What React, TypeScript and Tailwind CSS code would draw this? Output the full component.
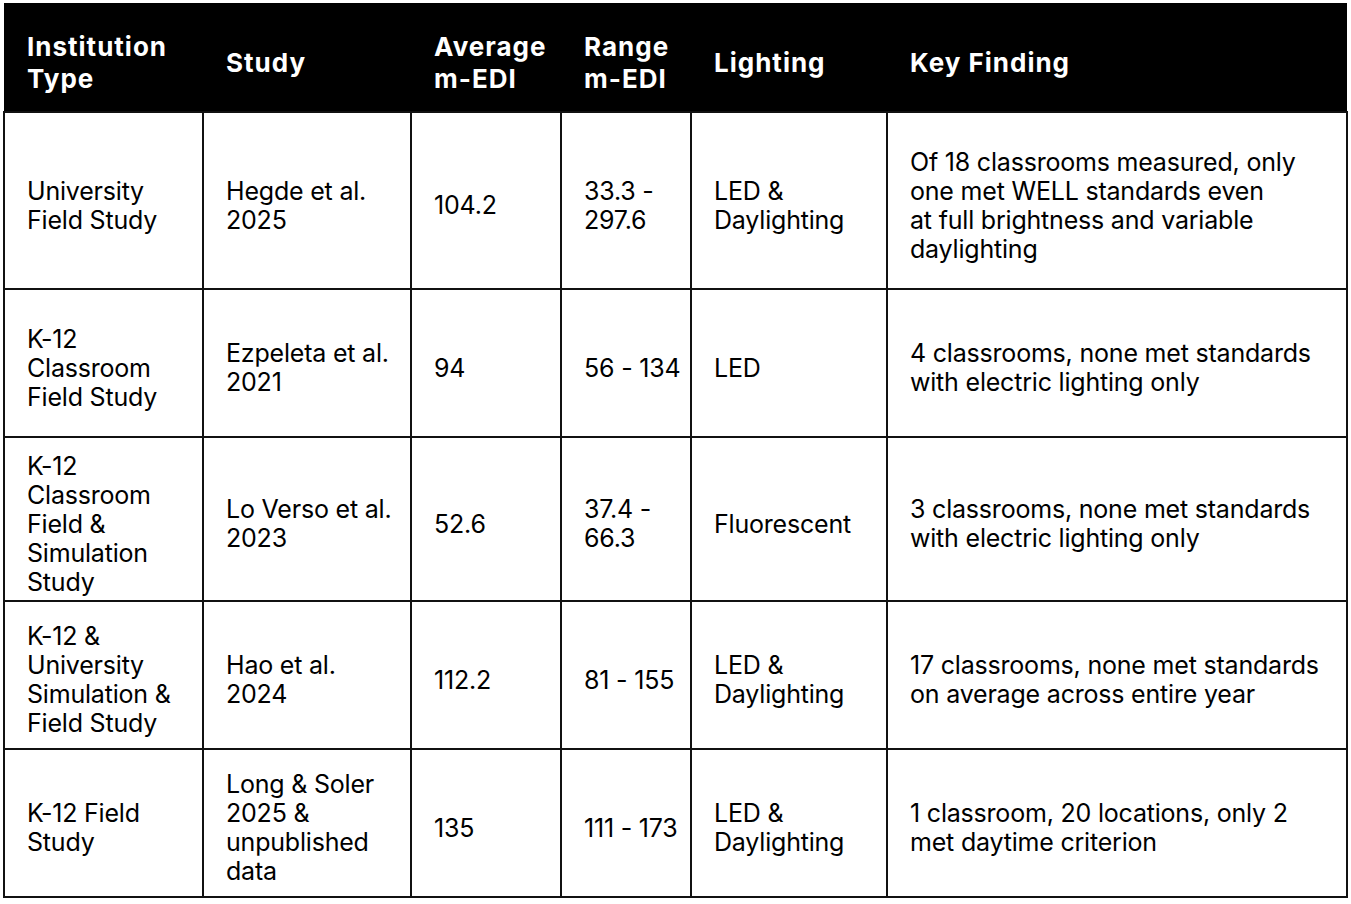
const ROWS = [
  {
    h: 'h-[177px]',
    type: ['University', 'Field Study'],
    study: ['Hegde et al.', '2025'],
    avg: '104.2',
    range: ['33.3 -', '297.6'],
    lighting: ['LED &', 'Daylighting'],
    finding: ['Of 18 classrooms measured, only', 'one met WELL standards even', 'at full brightness and variable', 'daylighting'],
  },
  {
    h: 'h-[148px]',
    type: ['K-12', 'Classroom', 'Field Study'],
    study: ['Ezpeleta et al.', '2021'],
    avg: '94',
    range: ['56 - 134'],
    lighting: ['LED'],
    finding: ['4 classrooms, none met standards', 'with electric lighting only'],
  },
  {
    h: 'h-[164px]',
    type: ['K-12', 'Classroom', 'Field &', 'Simulation', 'Study'],
    study: ['Lo Verso et al.', '2023'],
    avg: '52.6',
    range: ['37.4 -', '66.3'],
    lighting: ['Fluorescent'],
    finding: ['3 classrooms, none met standards', 'with electric lighting only'],
  },
  {
    h: 'h-[148px]',
    type: ['K-12 &', 'University', 'Simulation &', 'Field Study'],
    study: ['Hao et al.', '2024'],
    avg: '112.2',
    range: ['81 - 155'],
    lighting: ['LED &', 'Daylighting'],
    finding: ['17 classrooms, none met standards', 'on average across entire year'],
  },
  {
    h: 'h-[148px]',
    type: ['K-12 Field', 'Study'],
    study: ['Long & Soler', '2025 &', 'unpublished', 'data'],
    avg: '135',
    range: ['111 - 173'],
    lighting: ['LED &', 'Daylighting'],
    finding: ['1 classroom, 20 locations, only 2', 'met daytime criterion'],
  },
];

function Lines({ lines }: { lines: string[] }) {
  return (
    <>
      {lines.map((l, i) => (
        <div key={i} className="whitespace-nowrap">
          {l}
        </div>
      ))}
    </>
  );
}

export default function App() {
  const th = 'text-left align-middle pl-[23px] pr-2 pt-[12px] font-bold text-white text-[26px] leading-[32px] tracking-[1px]';
  const td = 'border-2 border-[#111] align-middle pl-[22px] pr-2 pt-[10px]';
  return (
    <div className="bg-white min-h-screen p-[3px] font-['Inter',sans-serif] text-black">
      <table className="table-fixed border-collapse w-[1343px]">
        <colgroup>
          <col className="w-[199px]" />
          <col className="w-[208px]" />
          <col className="w-[150px]" />
          <col className="w-[130px]" />
          <col className="w-[196px]" />
          <col className="w-[460px]" />
        </colgroup>
        <thead>
          <tr className="bg-black h-[109px]">
            <th className={th}>
              <Lines lines={['Institution', 'Type']} />
            </th>
            <th className={th}>Study</th>
            <th className={th}>
              <Lines lines={['Average', 'm-EDI']} />
            </th>
            <th className={th}>
              <Lines lines={['Range', 'm-EDI']} />
            </th>
            <th className={th}>Lighting</th>
            <th className={th}>Key Finding</th>
          </tr>
        </thead>
        <tbody className="text-[25px] leading-[29px] tracking-[-0.2px]">
          {ROWS.map((r, i) => (
            <tr key={i} className={r.h}>
              <td className={td}>
                <Lines lines={r.type} />
              </td>
              <td className={td}>
                <Lines lines={r.study} />
              </td>
              <td className={td}>{r.avg}</td>
              <td className={td}>
                <Lines lines={r.range} />
              </td>
              <td className={td}>
                <Lines lines={r.lighting} />
              </td>
              <td className={td}>
                <Lines lines={r.finding} />
              </td>
            </tr>
          ))}
        </tbody>
      </table>
    </div>
  );
}
